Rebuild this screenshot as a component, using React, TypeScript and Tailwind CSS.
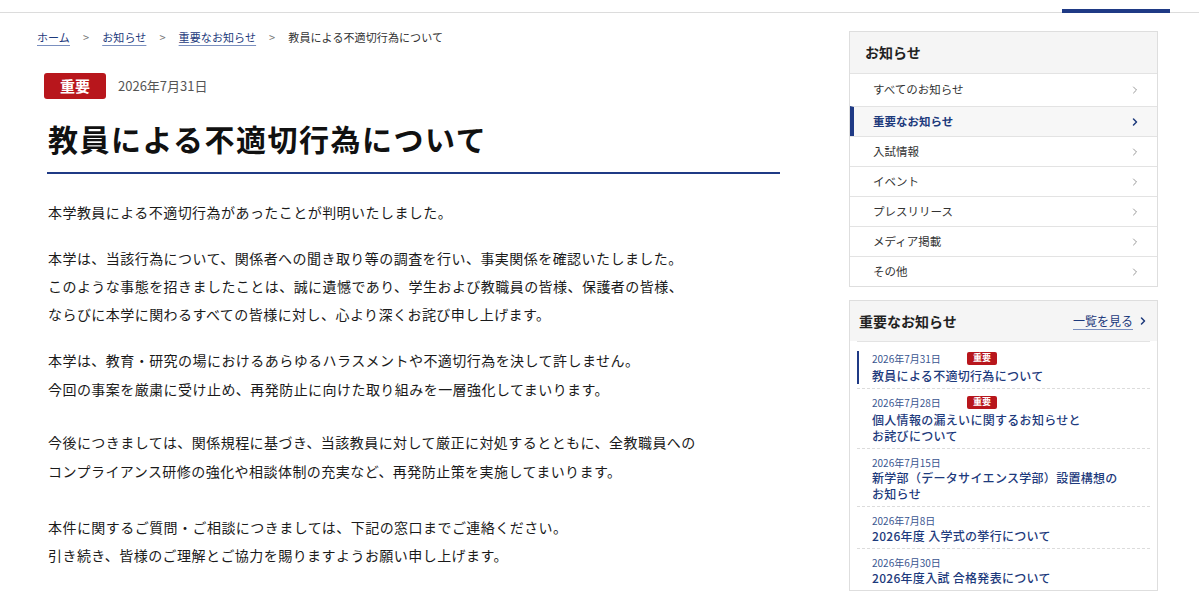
import { ChevronRight } from "lucide-react";

const NAVY = "text-[#1d3a7c]";

const categories = [
  { label: "すべてのお知らせ" },
  { label: "重要なお知らせ", active: true },
  { label: "入試情報" },
  { label: "イベント" },
  { label: "プレスリリース" },
  { label: "メディア掲載" },
  { label: "その他" },
];

const notices = [
  { date: "2026年7月31日", important: true, current: true, title: ["教員による不適切行為について"] },
  { date: "2026年7月28日", important: true, title: ["個人情報の漏えいに関するお知らせと", "お詫びについて"] },
  { date: "2026年7月15日", title: ["新学部（データサイエンス学部）設置構想の", "お知らせ"] },
  { date: "2026年7月8日", title: ["2026年度 入学式の挙行について"] },
  { date: "2026年6月30日", title: ["2026年度入試 合格発表について"] },
];

function Breadcrumb() {
  const link = `underline underline-offset-[3px] decoration-[#7a8fbf] ${NAVY}`;
  return (
    <nav className="flex items-center gap-[13px] text-[11px] leading-[16px] tracking-[0.1px]">
      <a className={link}>ホーム</a>
      <span className="text-[#777]">&gt;</span>
      <a className={link}>お知らせ</a>
      <span className="text-[#777]">&gt;</span>
      <a className={link}>重要なお知らせ</a>
      <span className="text-[#777]">&gt;</span>
      <span className="text-[#333]">教員による不適切行為について</span>
    </nav>
  );
}

function Article() {
  return (
    <article className="mt-[28px] pl-[7px] w-[743px]">
      <div className="flex items-center gap-[12px]">
        <span className="flex h-[26px] w-[62px] items-center justify-center rounded-[3px] bg-[#b8161c] text-[15px] font-bold text-white">
          重要
        </span>
        <span className="text-[13px] text-[#555]">2026年7月31日</span>
      </div>
      <h1 className="mt-[19px] ml-[3px] border-b-2 border-[#1f3a85] pl-[1px] pb-[14px] text-[30px] font-bold leading-[40px] tracking-[1.5px] text-[#111]">
        教員による不適切行為について
      </h1>
      <div className="mt-[24px] pl-[4px] text-[14px] leading-[28px] tracking-[0.45px] text-[#1a1a1a]">
        <p className="mb-[18px]">本学教員による不適切行為があったことが判明いたしました。</p>
        <p className="mb-[18px]">
          本学は、当該行為について、関係者への聞き取り等の調査を行い、事実関係を確認いたしました。
          <br />
          このような事態を招きましたことは、誠に遺憾であり、学生および教職員の皆様、保護者の皆様、
          <br />
          ならびに本学に関わるすべての皆様に対し、心より深くお詫び申し上げます。
        </p>
        <p className="mb-[24px] leading-[29px]">
          本学は、教育・研究の場におけるあらゆるハラスメントや不適切行為を決して許しません。
          <br />
          今回の事案を厳粛に受け止め、再発防止に向けた取り組みを一層強化してまいります。
        </p>
        <p className="mb-[27px] leading-[29px]">
          今後につきましては、関係規程に基づき、当該教員に対して厳正に対処するとともに、全教職員への
          <br />
          コンプライアンス研修の強化や相談体制の充実など、再発防止策を実施してまいります。
        </p>
        <p>
          本件に関するご質問・ご相談につきましては、下記の窓口までご連絡ください。
          <br />
          引き続き、皆様のご理解とご協力を賜りますようお願い申し上げます。
        </p>
      </div>
    </article>
  );
}

function CategoryMenu() {
  return (
    <section className="border border-[#dedede]">
      <h2 className="flex h-[41px] items-center bg-[#f5f5f5] pl-[15px] text-[14px] font-bold text-[#222]">
        お知らせ
      </h2>
      <ul>
        {categories.map((c, i) => (
          <li
            key={c.label}
            className={`flex items-center justify-between border-t border-[#e3e3e3] pr-[16px] text-[11.5px] ${
              i === 0 ? "h-[33px]" : "h-[30px]"
            } ${
              c.active
                ? `border-l-4 border-l-[#1f3a85] bg-[#f7f7f7] pl-[19px] font-bold ${NAVY}`
                : "pl-[23px] text-[#333]"
            }`}
          >
            <span>{c.label}</span>
            <ChevronRight
              size={12}
              strokeWidth={c.active ? 3 : 1.5}
              className={c.active ? "text-[#1d3a7c]" : "text-[#777]"}
            />
          </li>
        ))}
      </ul>
    </section>
  );
}

function ImportantList() {
  return (
    <section className="mt-[13px] border border-[#dedede]">
      <div className="flex h-[40px] items-center justify-between bg-[#f5f5f5] pl-[9px] pr-[8px]">
        <h2 className="text-[14px] font-bold text-[#222]">重要なお知らせ</h2>
        <a className={`flex items-center gap-[4px] text-[12px] ${NAVY}`}>
          <span className="underline underline-offset-[3px] decoration-[#7a8fbf]">一覧を見る</span>
          <ChevronRight size={12} strokeWidth={3} />
        </a>
      </div>
      <ul className="mx-[7px] border-t border-[#e3e3e3]">
        {notices.map((n, i) => (
          <li
            key={n.date}
            className={`${i > 0 ? "border-t border-dashed border-[#dcdcdc] pt-[6px]" : "pt-[9px]"} pb-[4px]`}
          >
            <div
              className={
                n.current ? "border-l-2 border-[#1f3a85] pl-[13px]" : "pl-[15px]"
              }
            >
              <div className="flex h-[14px] items-center">
                <span className="w-[95px] text-[10px] text-[#3a5590]">{n.date}</span>
                {n.important && (
                  <span className="flex h-[13px] w-[30px] items-center justify-center rounded-[2px] bg-[#b8161c] text-[9px] font-bold text-white">
                    重要
                  </span>
                )}
              </div>
              <p
                className={`${n.important ? "mt-[3px]" : "mt-[1px]"} text-[12px] font-medium leading-[16px] tracking-[0.3px] ${NAVY}`}
              >
                {n.title.map((t, j) => (
                  <span key={j} className="block">
                    {t}
                  </span>
                ))}
              </p>
            </div>
          </li>
        ))}
      </ul>
    </section>
  );
}

export default function App() {
  return (
    <div className="min-h-screen bg-white font-['Noto_Sans_CJK_JP','Noto_Sans',sans-serif]">
      <header className="h-[13px] border-b border-[#dcdcdc] pt-[9px]">
        <div className="ml-[1062px] h-[4px] w-[108px] bg-[#1f3a85]" />
      </header>
      <div className="flex items-start pl-[37px]">
        <main className="pt-[16px]">
          <Breadcrumb />
          <Article />
        </main>
        <aside className="ml-[69px] mt-[18px] w-[309px]">
          <CategoryMenu />
          <ImportantList />
        </aside>
      </div>
    </div>
  );
}
